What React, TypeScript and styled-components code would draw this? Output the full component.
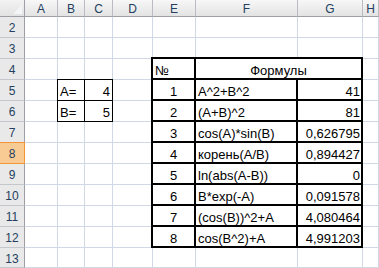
import styled, { createGlobalStyle } from 'styled-components';

const GlobalStyle = createGlobalStyle`
  html, body {
    margin: 0;
    padding: 0;
    background: #ffffff;
  }
  body {
    font-family: 'Liberation Sans', Arial, sans-serif;
    overflow: hidden;
  }
`;

const colWidths = [25, 33, 27, 28, 40, 43, 102, 65, 16];
const rowHeights = [17, ...Array(11).fill(21), 20];
const letters = ['A', 'B', 'C', 'D', 'E', 'F', 'G', 'H'];
const selectedRow = 8;

const formulas = [
    ['1', 'A^2+B^2', '41'],
    ['2', '(A+B)^2', '81'],
    ['3', 'cos(A)*sin(B)', '0,626795'],
    ['4', 'корень(A/B)', '0,894427'],
    ['5', 'ln(abs(A-B))', '0'],
    ['6', 'B*exp(-A)', '0,091578'],
    ['7', '(cos(B))^2+A', '4,080464'],
    ['8', 'cos(B^2)+A', '4,991203'],
];

// cells covered by the bordered blocks are not drawn as plain cells
const inParams = (row: number, col: number) => row >= 5 && row <= 6 && col >= 1 && col <= 2;
const inTable = (row: number, col: number) => row >= 4 && row <= 12 && col >= 4 && col <= 6;

type Align = 'left' | 'center' | 'right';

const App = () => {
    const rows = rowHeights.slice(1).map((_, i) => i + 2);
    return (
        <>
            <GlobalStyle />
            <Sheet>
                <Corner>
                    <svg width="9" height="9" viewBox="0 0 9 9">
                        <polygon points="9,0 9,9 0,9" fill="#f4f5f6" />
                    </svg>
                </Corner>
                {letters.map((letter) => (
                    <ColHeader key={letter}>{letter}</ColHeader>
                ))}
                {rows.map((row) => [
                    <RowHeader key={`h${row}`} $selected={row === selectedRow}>
                        {row}
                    </RowHeader>,
                    ...letters.map((letter, col) =>
                        inParams(row, col) || inTable(row, col) ? null : <Cell key={`${letter}${row}`} />,
                    ),
                ])}

                <ParamBox>
                    <ParamCell $align="left">A=</ParamCell>
                    <ParamCell $align="right">4</ParamCell>
                    <ParamCell $align="left">B=</ParamCell>
                    <ParamCell $align="right">5</ParamCell>
                </ParamBox>

                <FormulaTable>
                    <TableCell $align="left">№</TableCell>
                    <TableCell $align="center" $span={2}>
                        Формулы
                    </TableCell>
                    {formulas.map(([n, text, value]) => [
                        <TableCell key={`n${n}`} $align="center">
                            {n}
                        </TableCell>,
                        <TableCell key={`f${n}`} $align="left">
                            {text}
                        </TableCell>,
                        <TableCell key={`v${n}`} $align="right">
                            {value}
                        </TableCell>,
                    ])}
                </FormulaTable>
            </Sheet>
        </>
    );
};

export default App;

const justify = (align: Align) =>
    align === 'left' ? 'flex-start' : align === 'right' ? 'flex-end' : 'center';

const Sheet = styled.div`
    display: grid;
    grid-template-columns: ${colWidths.map((w) => `${w}px`).join(' ')};
    grid-template-rows: ${rowHeights.map((h) => `${h}px`).join(' ')};
    width: 379px;
    height: 268px;
    overflow: hidden;
    background: #ffffff;
    color: #000000;
`;

const HeaderBase = styled.div`
    box-sizing: border-box;
    display: flex;
    align-items: center;
    justify-content: center;
    font-size: 12px;
    line-height: 14px;
    color: #243f60;
    overflow: hidden;
`;

const Corner = styled(HeaderBase)`
    align-items: flex-end;
    justify-content: flex-end;
    padding: 0 2px 2px 0;
    background: linear-gradient(to bottom, #f3f3f3, #e2e2e2);
    border-right: 1px solid #9c9fa3;
    border-bottom: 1px solid #9c9fa3;

    svg {
        display: block;
    }
`;

const ColHeader = styled(HeaderBase)`
    padding-top: 2px;
    background: linear-gradient(to bottom, #f7f7f7, #e3e3e3);
    border-right: 1px solid #b9bcc0;
    border-bottom: 1px solid #9c9fa3;
`;

const RowHeader = styled(HeaderBase)<{ $selected?: boolean }>`
    padding-top: 2px;
    background: ${(p) => (p.$selected ? '#f8cb94' : '#e9e9e9')};
    border-right: 1px solid ${(p) => (p.$selected ? '#f29536' : '#9c9fa3')};
    border-bottom: 1px solid ${(p) => (p.$selected ? '#f29536' : '#c4c7cb')};
    box-shadow: ${(p) => (p.$selected ? '0 -1px 0 #f29536' : 'none')};
`;

const Cell = styled.div`
    box-sizing: border-box;
    background: #ffffff;
    border-right: 1px solid #d0d7e5;
    border-bottom: 1px solid #d0d7e5;
`;

const ParamBox = styled.div`
    grid-column: 3 / 5;
    grid-row: 5 / 7;
    margin: -1px 0 0 -1px;
    display: grid;
    grid-template-columns: 26px 27px;
    grid-template-rows: 20px 20px;
    gap: 1px;
    padding: 1px;
    background: #000000;
`;

const ParamCell = styled.div<{ $align: Align }>`
    display: flex;
    align-items: flex-end;
    justify-content: ${(p) => justify(p.$align)};
    padding: 0 2px 1px 2px;
    background: #ffffff;
    font-size: 13px;
    line-height: 15px;
    white-space: nowrap;
`;

const FormulaTable = styled.div`
    grid-column: 6 / 9;
    grid-row: 4 / 13;
    margin: -2px 0 0 -2px;
    display: grid;
    grid-template-columns: 41px 100px 63px;
    grid-template-rows: repeat(9, 19px);
    gap: 2px;
    padding: 2px;
    background: #000000;
`;

const TableCell = styled.div<{ $align: Align; $span?: number }>`
    grid-column: span ${(p) => p.$span ?? 1};
    display: flex;
    align-items: flex-end;
    justify-content: ${(p) => justify(p.$align)};
    padding: 0 ${(p) => (p.$align === 'right' ? 1 : 2)}px 0 2px;
    background: #ffffff;
    font-size: 13px;
    line-height: 15px;
    white-space: nowrap;
    overflow: hidden;
`;
